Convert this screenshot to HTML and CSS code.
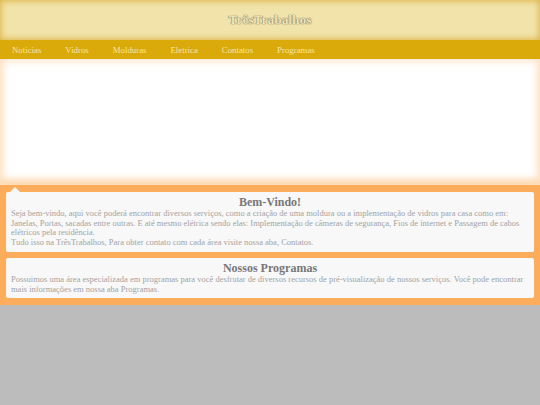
FILE: index.html
```html
<!DOCTYPE html>
<html lang="pt">
<head>
<meta charset="utf-8">
<title>TrêsTrabalhos</title>
<link rel="stylesheet" href="styles.css">
</head>
<body>
<header class="topo">
  <h1 class="logo">TrêsTrabalhos</h1>
</header>
<nav class="menu">
  <a href="#">Noticias</a>
  <a href="#">Vidros</a>
  <a href="#">Molduras</a>
  <a href="#">Eletrica</a>
  <a href="#">Contatos</a>
  <a href="#">Programas</a>
</nav>
<div class="banner"></div>
<main class="conteudo">
  <section class="card card-seta">
    <h2 class="card-titulo">Bem-Vindo!</h2>
    <p class="card-texto">Seja bem-vindo, aqui você poderá encontrar diversos serviços, como a criação de uma moldura ou a implementação de vidros para casa como em: Janelas, Portas, sacadas entre outras. E até mesmo elétrica sendo elas: Implementação de câmeras de segurança, Fios de internet e Passagem de cabos elétricos pela residência.<br>Tudo isso na TrêsTrabalhos, Para obter contato com cada área visite nossa aba, Contatos.</p>
  </section>
  <section class="card">
    <h2 class="card-titulo">Nossos Programas</h2>
    <p class="card-texto">Possuimos uma área especializada em programas para você desfrutar de diversos recursos de pré-visualização de nossos serviços. Você pode encontrar mais informações em nossa aba Programas.</p>
  </section>
</main>
</body>
</html>
```
FILE: styles.css
```css
html, body {
  margin: 0;
  padding: 0;
}
body {
  background: #bcbcbc;
  font-family: "Liberation Serif", "Times New Roman", serif;
}
.topo {
  height: 40px;
  background: #f1e3a9;
  box-shadow: inset 0 0 6px 1px #dcb445;
  display: flex;
  align-items: center;
  justify-content: center;
}
.logo {
  margin: 0;
  font-size: 13.4px;
  font-weight: bold;
  color: #f3e6b4;
  text-shadow: 0 0 1px #666, 0 0 1px #666;
}
.menu {
  height: 19px;
  background: #daa90a;
  display: flex;
  align-items: center;
  padding-left: 0;
}
.menu a {
  color: #f6e6a6;
  text-decoration: none;
  font-size: 8.8px;
  padding: 1px 12px 0;
}
.banner {
  height: 126px;
  background: #ffffff;
  box-shadow: inset 0 0 8px 2px #fde2c4, inset 0 -6px 8px -2px #fcc68c;
}
.conteudo {
  background: #fbad5b;
  padding: 7px 6px 7px;
  display: flex;
  flex-direction: column;
  gap: 6px;
}
.card {
  position: relative;
  background: #f8f8f8;
  border-radius: 2px;
  padding: 3px 5px 4px;
}
.card-seta::before {
  content: "";
  position: absolute;
  left: 4px;
  top: -5px;
  border-left: 5px solid transparent;
  border-right: 5px solid transparent;
  border-bottom: 5px solid #f8f8f8;
}
.card-titulo {
  margin: 0;
  text-align: center;
  font-size: 12px;
  font-weight: bold;
  color: #777777;
  line-height: 14px;
}
.card-texto {
  margin: 0;
  font-size: 8.5px;
  line-height: 9.7px;
  color: #a3a3a3;
}
```
